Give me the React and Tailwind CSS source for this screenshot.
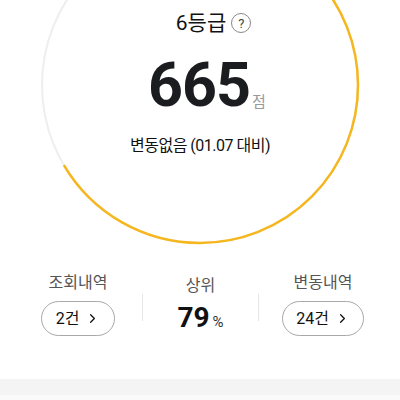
import { ChevronRight } from "lucide-react"

const R = 158
const CIRC = 2 * Math.PI * R
const SCORE = 665

// 신용점수 게이지
function Gauge() {
  return (
    <svg
      className="absolute left-0 top-0"
      width="400"
      height="250"
      viewBox="0 0 400 250"
    >
      <circle cx="200" cy="85" r={R} fill="none" stroke="#eeeeee" strokeWidth="2" />
      <circle
        cx="200"
        cy="85"
        r={R}
        fill="none"
        stroke="#f6b61e"
        strokeWidth="2.5"
        strokeDasharray={`${(CIRC * SCORE) / 1000} ${CIRC}`}
        transform="rotate(-90 200 85)"
      />
    </svg>
  )
}

function CountButton({ label, count, width }) {
  return (
    <div className="flex flex-col items-center">
      <p className="text-[16px] leading-[20px] text-[#555]">{label}</p>
      <button
        className={`mt-[8px] flex h-[35px] ${width} items-center justify-center gap-[6px] rounded-full border border-[#a8a8a8] text-[16px] text-[#111]`}
      >
        <span>{count}</span>
        <ChevronRight size={15} strokeWidth={2} />
      </button>
    </div>
  )
}

export default function App() {
  return (
    <div
      className="h-[400px] w-[400px] overflow-hidden bg-white"
      style={{ fontFamily: 'Roboto, "Noto Sans CJK KR", sans-serif' }}
    >
      <div className="relative h-[250px]">
        <Gauge />
        <div className="relative flex flex-col items-center pt-[9px]">
          <div className="relative pl-[2px] text-[21px] leading-[28px] text-[#111]">
            <span>6등급</span>
            <span className="absolute left-full top-[4px] ml-[5px] flex h-[20px] w-[20px] items-center justify-center rounded-full border border-[#888] text-[13px] leading-none text-[#444]">
              ?
            </span>
          </div>
          <div className="mt-[20px] flex items-end pl-[14px]">
            <span className="text-[61px] font-bold leading-[56px] tracking-[-1px] text-[#1b1c1f]">
              665
            </span>
            <span className="mb-[2px] ml-[2px] text-[15px] leading-[18px] text-[#999]">
              점
            </span>
          </div>
          <p className="mt-[22px] text-[16px] leading-[22px] tracking-[-0.5px] text-[#111]">
            변동없음 (01.07 대비)
          </p>
        </div>
      </div>

      <div className="mt-[23px] grid grid-cols-[128px_1px_115px_1px_128px] items-center px-[14px]">
        <CountButton label="조회내역" count="2건" width="w-[74px]" />
        <div className="mt-[6px] h-[27px] bg-[#e6e6e6]" />
        <div className="flex flex-col items-center">
          <p className="text-[16px] leading-[20px] text-[#555]">상위</p>
          <p className="mt-[6px] flex items-baseline">
            <span className="text-[28px] font-bold leading-[32px] text-[#111]">79</span>
            <span className="ml-[3px] text-[15px] text-[#333]">%</span>
          </p>
        </div>
        <div className="mt-[6px] h-[27px] bg-[#e6e6e6]" />
        <CountButton label="변동내역" count="24건" width="w-[82px]" />
      </div>

      <div className="mt-[43px] h-[16px] bg-[#f4f4f4]" />
      <div className="h-[20px] bg-[#fafafa]" />
    </div>
  )
}
